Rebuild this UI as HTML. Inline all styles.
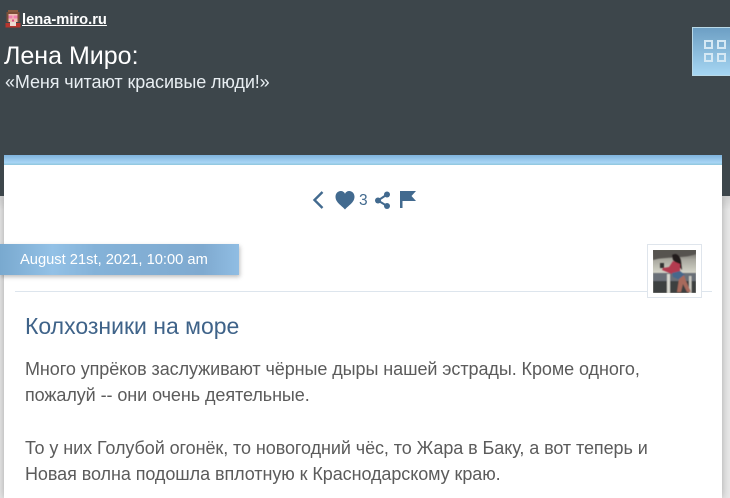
<!DOCTYPE html>
<html lang="ru"><head><meta charset="utf-8"><title>Лена Миро</title>
<style>
html,body{margin:0;padding:0;width:730px;height:498px;overflow:hidden;background:#eeeeee;font-family:"Liberation Sans",Arial,sans-serif}
.a{position:absolute;white-space:nowrap}
#side{left:0;top:196px;width:730px;height:302px;background:linear-gradient(#d2d2d2,#e8e8e8 14px)}
#shadow{left:4px;top:196px;width:718px;height:302px;background:#fff;box-shadow:0 0 8px rgba(0,0,0,.28)}
#head{left:0;top:0;width:730px;height:196px;background:#3d464b}
#card{left:4px;top:155px;width:718px;height:343px;background:#fff}
#bar{left:4px;top:155px;width:718px;height:10px;background:linear-gradient(#7fb3dc,#a8d5f5 75%,#8fc6dc)}
#btn{left:692px;top:27px;width:38px;height:49px;background:linear-gradient(#6d9fc4,#a6d6f2);border:1px solid #b9d9e8;border-right:0;box-sizing:border-box}
.sq{position:absolute;width:5px;height:5px;border:2px solid #d6e9f4;box-sizing:content-box}
#date{left:0;top:244px;width:239px;height:31px;background:linear-gradient(90deg,#79a9cf 0,#93c1e6 22%,#84b2d8 40%,#7faad0 85%,#90bde3 100%);box-shadow:1px 2px 4px rgba(0,0,0,.25);color:#fff;font-size:14.7px;line-height:32px;text-indent:20px}
#hr{left:15px;top:291px;width:697px;height:1px;background:#dde5ed}
#ava{left:647px;top:244px;width:55px;height:54px;box-sizing:border-box;background:#fff;border:1px solid #dfe5ec}
</style></head><body>
<div class="a" id="side"></div>
<div class="a" id="shadow"></div>
<div class="a" id="head"></div>
<div class="a" id="card"></div>
<div class="a" id="bar"></div>

<svg class="a" style="left:5px;top:10px" width="16" height="18" viewBox="0 0 16 18">
<rect x="3" y="0" width="10" height="3" fill="#8a5a40"/><rect x="1.500" y="2" width="13" height="10" fill="#7c4e38"/>
<rect x="3.500" y="4" width="9" height="8" fill="#eec2b4"/><rect x="3.500" y="5.500" width="4" height="3" fill="#f080b0"/><rect x="8.500" y="5.500" width="4" height="3" fill="#f080b0"/>
<rect x="7" y="9.500" width="2" height="2" fill="#e0508a"/><rect x="0.500" y="13" width="15" height="4.500" fill="#b8352e"/><rect x="5" y="12" width="6" height="4" fill="#ecdcd4"/>
</svg>
<div class="a" style="left:22px;top:12px;color:#fff;font-size:14.7px;font-weight:bold;line-height:17px;text-decoration:underline">lena-miro.ru</div>
<div class="a" style="left:4px;top:41px;color:#fff;font-size:25px;line-height:30px">Лена Миро:</div>
<div class="a" style="left:5px;top:72px;color:#e8eef2;font-size:18px;line-height:21px;letter-spacing:-.1px">«Меня читают красивые люди!»</div>

<div class="a" id="btn">
<div class="sq" style="left:11px;top:12px"></div><div class="sq" style="left:24px;top:12px"></div>
<div class="sq" style="left:11px;top:25px"></div><div class="sq" style="left:24px;top:25px"></div>
</div>

<svg class="a" style="left:310px;top:188px" width="110" height="24" viewBox="0 0 110 24">
<path d="M12.500 4 L4.500 12 L12.500 20" fill="none" stroke="#426a8f" stroke-width="2.400"/>
<path d="M35 21.500 C31.500 17.500 25.500 14.500 25.500 8.800 C25.500 5.500 27.800 3 30.800 3 C32.700 3 34.200 4 35 5.700 C35.800 4 37.300 3 39.200 3 C42.200 3 44.500 5.500 44.500 8.800 C44.500 14.500 38.500 17.500 35 21.500Z" fill="#426a8f"/>
<path d="M77 6.500 L68 12.500 L77 18" fill="none" stroke="#426a8f" stroke-width="2"/>
<circle cx="77" cy="6.500" r="3" fill="#426a8f"/><circle cx="68" cy="12.500" r="3" fill="#426a8f"/><circle cx="77" cy="18" r="3" fill="#426a8f"/>
<rect x="90" y="3" width="2.500" height="17" fill="#426a8f"/>
<path d="M92 3 H106 L101.500 8 L106 13 H92Z" fill="#426a8f"/>
</svg>
<div class="a" style="left:359px;top:193px;color:#426a8f;font-size:15.500px;line-height:16px">3</div>

<div class="a" id="hr"></div>
<div class="a" id="date">August 21st, 2021, 10:00 am</div>

<div class="a" id="ava">
<svg style="position:absolute;left:5px;top:5px" width="43" height="43" viewBox="0 0 43 43">
<defs><linearGradient id="s" x1="0" y1="0" x2="0" y2="1"><stop offset="0" stop-color="#5d5a56"/><stop offset=".22" stop-color="#a8a79e"/><stop offset=".5" stop-color="#d0d0c4"/></linearGradient><filter id="b"><feGaussianBlur stdDeviation=".5"/></filter></defs>
<rect width="43" height="43" fill="url(#s)"/>
<g filter="url(#b)">
<path d="M0 0H43V4C30 9 14 6 0 10Z" fill="#56534f"/>
<rect y="23" width="43" height="20" fill="#6a7078"/>
<rect y="31" width="43" height="12" fill="#3c3f40"/>
<rect x="14" y="24" width="3" height="19" fill="#d8d8d0"/>
<rect x="36" y="26" width="2.500" height="17" fill="#c8c8c0"/>
<path d="M19 5 C23 2 27 5 28 11 L29 20 L25 15 L20 10Z" fill="#241a1a"/>
<path d="M20 11 L27 14 L27 23 L19 24 L9 20 L10 18 L16 17Z" fill="#b33a50"/>
<path d="M19 23 L27 21 L32 25 L27 30 L20 27Z" fill="#46688c"/>
<path d="M26 29 L31 25 L33 31 L38 42 L34 42 L30 34 L28 42 L24 42Z" fill="#a86a5c"/>
<rect x="7" y="13" width="4" height="5" fill="#333"/>
</g>
</svg>
</div>

<div class="a" style="left:25px;top:313px;color:#3f6389;font-size:23px;line-height:27px">Колхозники на море</div>
<div class="a" style="left:25px;top:356px;color:#5b5b5b;font-size:18px;line-height:26.300px;letter-spacing:-.072px">Много упрёков заслуживают чёрные дыры нашей эстрады. Кроме одного,<br>пожалуй -- они очень деятельные.<br><br>То у них Голубой огонёк, то новогодний чёс, то Жара в Баку, а вот теперь и<br>Новая волна подошла вплотную к Краснодарскому краю.</div>
</body></html>
